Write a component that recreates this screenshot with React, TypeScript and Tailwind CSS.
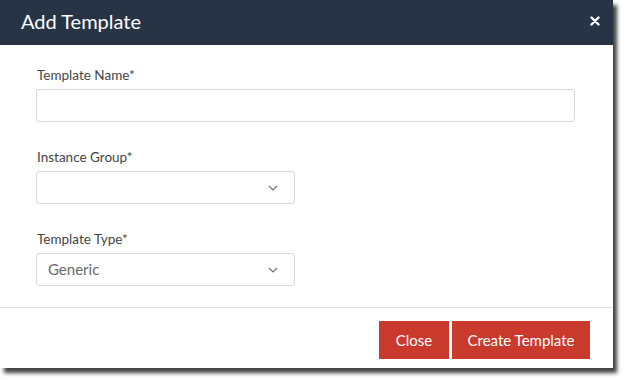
import { useState } from "react";

function Chevron() {
  return (
    <svg width="10" height="6" viewBox="0 0 10 6" className="shrink-0">
      <path d="M1 1l4 4 4-4" fill="none" stroke="#6b6f76" strokeWidth="1.2" />
    </svg>
  );
}

function Field({ label, children }: { label: string; children: React.ReactNode }) {
  return (
    <div className="flex flex-col">
      <label className="mb-[4px] h-[20px] pl-[1px] text-[13.5px] leading-[20px] text-[#444]">{label}</label>
      {children}
    </div>
  );
}

function SelectBox({ value }: { value?: string }) {
  return (
    <div className="flex h-[33px] w-[259px] items-center justify-between rounded-[3px] border border-[#d5d7dc] bg-white pl-[11px] pr-[16px]">
      <span className="text-[15px] text-[#6a6a6a]">{value ?? ""}</span>
      <Chevron />
    </div>
  );
}

export default function App() {
  const [name, setName] = useState("");

  return (
    <div className="h-[380px] w-[624px] bg-white font-['Lato',sans-serif]">
      <div className="flex h-[368px] w-[613px] flex-col bg-white shadow-[4px_5px_4px_rgba(0,0,0,0.75)]">
        <div className="flex h-[45px] shrink-0 items-center justify-between bg-[#263445] pb-[3px] pl-[21px] pr-[10px]">
          <h2 className="text-[20px] leading-[24px] text-white">Add Template</h2>
          <button type="button" className="flex h-[16px] w-[16px] items-center justify-center">
            <svg width="10" height="10" viewBox="0 0 10 10">
              <path d="M1.5 1.5l7 7M8.5 1.5l-7 7" stroke="white" strokeWidth="2.4" strokeLinecap="round" />
            </svg>
          </button>
        </div>

        <div className="flex flex-col gap-[25px] pb-[21px] pl-[36px] pr-[38px] pt-[20px]">
          <Field label="Template Name*">
            <input
              value={name}
              onChange={(e) => setName(e.target.value)}
              className="h-[33px] rounded-[3px] border border-[#d5d7dc] px-[11px] text-[15px] outline-none"
            />
          </Field>
          <Field label="Instance Group*">
            <SelectBox />
          </Field>
          <Field label="Template Type*">
            <SelectBox value="Generic" />
          </Field>
        </div>

        <div className="flex flex-1 justify-end gap-[3px] border-t border-[#e3e4e7] pr-[23px] pt-[13px]">
          <button type="button" className="h-[38px] w-[70px] bg-[#c93a2c] text-[15px] text-white">
            Close
          </button>
          <button type="button" className="h-[38px] w-[138px] bg-[#c93a2c] text-[15px] text-white">
            Create Template
          </button>
        </div>
      </div>
    </div>
  );
}
